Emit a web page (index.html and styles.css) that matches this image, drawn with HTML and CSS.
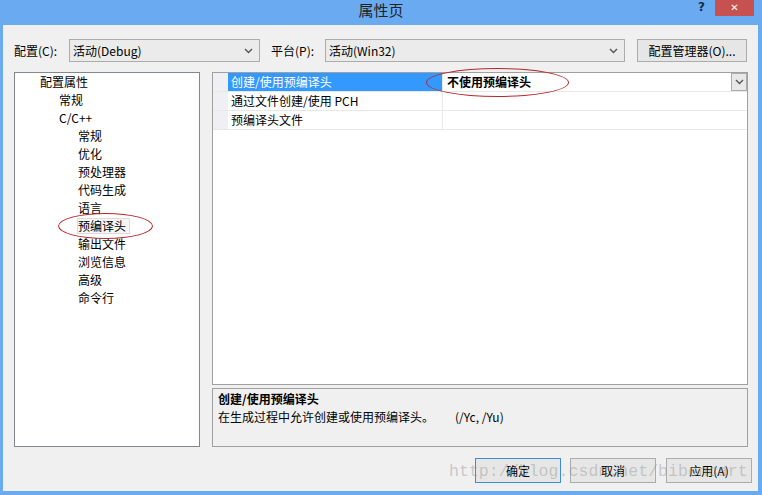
FILE: index.html
```html
<!DOCTYPE html>
<html lang="zh-CN">
<head>
<meta charset="utf-8">
<title>属性页</title>
<link rel="stylesheet" href="styles.css">
</head>
<body>
<div class="window">
  <div class="titlebar">
    <div></div>
    <div class="title">属性页</div>
    <div class="controls">
      <span class="help">?</span>
      <span class="close">✕</span>
    </div>
  </div>
  <div class="content">
    <div class="toprow">
      <span class="label l1">配置(C):</span>
      <div class="combo c1"><span>活动(Debug)</span><svg class="chev" width="9" height="6" viewBox="0 0 9 6"><path d="M1 1 L4.5 4.5 L8 1" fill="none" stroke="#555" stroke-width="1.4"/></svg></div>
      <span class="label l2">平台(P):</span>
      <div class="combo c2"><span>活动(Win32)</span><svg class="chev" width="9" height="6" viewBox="0 0 9 6"><path d="M1 1 L4.5 4.5 L8 1" fill="none" stroke="#555" stroke-width="1.4"/></svg></div>
      <div class="btn mgr">配置管理器(O)...</div>
    </div>
    <div class="panels">
      <div class="tree">
        <div class="node lv0">配置属性</div>
        <div class="node lv1">常规</div>
        <div class="node lv1">C/C++</div>
        <div class="node lv2">常规</div>
        <div class="node lv2">优化</div>
        <div class="node lv2">预处理器</div>
        <div class="node lv2">代码生成</div>
        <div class="node lv2">语言</div>
        <div class="node lv2"><span class="sel">预编译头</span></div>
        <div class="node lv2">输出文件</div>
        <div class="node lv2">浏览信息</div>
        <div class="node lv2">高级</div>
        <div class="node lv2">命令行</div>
      </div>
      <div class="rightpanel">
        <div class="grid">
          <div class="row">
            <div class="gut"></div>
            <div class="name selrow">创建/使用预编译头</div>
            <div class="value"><b>不使用预编译头</b><span class="dd"><svg width="9" height="6" viewBox="0 0 9 6"><path d="M1 1 L4.5 4.5 L8 1" fill="none" stroke="#555" stroke-width="1.4"/></svg></span></div>
          </div>
          <div class="row">
            <div class="gut"></div>
            <div class="name">通过文件创建/使用 PCH</div>
            <div class="value"></div>
          </div>
          <div class="row">
            <div class="gut"></div>
            <div class="name">预编译头文件</div>
            <div class="value"></div>
          </div>
        </div>
        <div class="desc">
          <div class="dtitle">创建/使用预编译头</div>
          <div class="dtext">在生成过程中允许创建或使用预编译头。<span class="sw">(/Yc, /Yu)</span></div>
        </div>
      </div>
    </div>
    <div class="buttons">
      <div class="btn dbtn default">确定</div>
      <div class="btn dbtn">取消</div>
      <div class="btn dbtn">应用(A)</div>
    </div>
  </div>
  <div class="watermark">http://blog.csdn.net/bibencart</div>
  <div class="ellipse e1"></div>
  <div class="ellipse e2"></div>
</div>
</body>
</html>
```

FILE: styles.css
```css
* { box-sizing: border-box; }
html, body { margin: 0; padding: 0; }
body {
  font-family: "Noto Sans CJK SC", "Microsoft YaHei", sans-serif;
  font-size: 12px;
  color: #000;
}
.window {
  position: relative;
  width: 762px;
  height: 495px;
  background: #6aaaf1;
  display: flex;
  flex-direction: column;
  overflow: hidden;
}
.titlebar {
  height: 25px;
  display: grid;
  grid-template-columns: 1fr auto 1fr;
  align-items: start;
}
.title {
  font-size: 15px;
  line-height: 20px;
  color: #222;
  padding-top: 0;
}
.controls {
  display: flex;
  justify-content: flex-end;
  align-items: flex-start;
  padding-right: 8px;
}
.help {
  font-family: "DejaVu Sans", sans-serif;
  font-weight: bold;
  font-size: 12px;
  line-height: 14px;
  color: #1a2d44;
  margin-right: 10px;
}
.close {
  width: 39px;
  height: 16px;
  background: #c75050;
  color: #fff;
  font-family: "DejaVu Sans", sans-serif;
  font-size: 10px;
  font-weight: bold;
  line-height: 16px;
  text-align: center;
}
.content {
  flex: 1;
  margin: 0 4px 4px 3px;
  background: #f0f0f0;
  padding: 14px 0 0 11px;
  display: flex;
  flex-direction: column;
}
.toprow {
  display: flex;
  align-items: center;
  height: 23px;
}
.label { line-height: 23px; white-space: nowrap; }
.l1 { width: 55px; }
.l2 { width: 54px; margin-left: 11px; }
.combo {
  height: 23px;
  border: 1px solid #acacac;
  background: #ebebeb;
  display: flex;
  align-items: center;
  justify-content: space-between;
  padding: 0 6px 0 3px;
}
.c1 { width: 191px; }
.c2 { width: 300px; }
.btn {
  border: 1px solid #acacac;
  background: #e6e6e6;
  display: flex;
  align-items: center;
  justify-content: center;
}
.mgr { width: 110px; height: 23px; margin-left: 12px; }
.panels {
  display: flex;
  gap: 12px;
  margin-top: 10px;
  height: 375px;
}
.tree {
  width: 186px;
  height: 375px;
  border: 1px solid #828790;
  background: #fff;
}
.node { height: 18px; line-height: 18px; white-space: nowrap; }
.lv0 { padding-left: 25px; }
.lv1 { padding-left: 44px; }
.lv2 { padding-left: 63px; }
.sel {
  display: inline-block;
  height: 16px;
  line-height: 14px;
  margin-left: -1px;
  padding: 0 3px 0 0;
  border: 1px solid #dcdcdc;
  background: #f5f5f5;
}
.rightpanel {
  width: 536px;
  display: flex;
  flex-direction: column;
  gap: 3px;
}
.grid {
  height: 313px;
  border: 1px solid #a0a0a0;
  background: #fff;
}
.row {
  display: flex;
  height: 19px;
  border-bottom: 1px solid #e8e8e8;
}
.gut { width: 15px; background: #f0f0f4; }
.name {
  width: 215px;
  padding-left: 3px;
  line-height: 18px;
  border-right: 1px solid #e8e8e8;
  white-space: nowrap;
}
.selrow { background: #3399ff; color: #fff; }
.value {
  flex: 1;
  display: flex;
  justify-content: space-between;
  align-items: flex-start;
  padding-left: 4px;
  line-height: 18px;
}
.dd {
  width: 16px;
  height: 18px;
  margin-right: 0;
  border: 1px solid #acacac;
  background: #e8e8e8;
  display: flex;
  align-items: center;
  justify-content: center;
}
.desc {
  height: 59px;
  border: 1px solid #a0a0a0;
  background: #f0f0f0;
  padding: 1px 0 0 5px;
}
.dtitle { font-weight: bold; line-height: 18px; }
.dtext { line-height: 18px; white-space: nowrap; }
.sw { margin-left: 21px; }
.buttons {
  display: flex;
  justify-content: flex-end;
  gap: 9px;
  margin-top: 11px;
  padding-right: 6px;
}
.dbtn { width: 86px; height: 25px; }
.dbtn + .dbtn + .dbtn { margin-left: 1px; }
.default { border-color: #3c8be0; }
.watermark {
  position: absolute;
  left: 449px;
  top: 463px;
  font-family: "Liberation Mono", monospace;
  font-size: 16.6px;
  line-height: 18px;
  color: rgba(150, 150, 150, 0.45);
  white-space: nowrap;
}
.ellipse {
  position: absolute;
  border: 1px solid #b8282c;
  border-radius: 50%;
}
.e1 { left: 58px; top: 213px; width: 95px; height: 26px; }
.e2 { left: 426px; top: 68px; width: 143px; height: 29px; }
```
